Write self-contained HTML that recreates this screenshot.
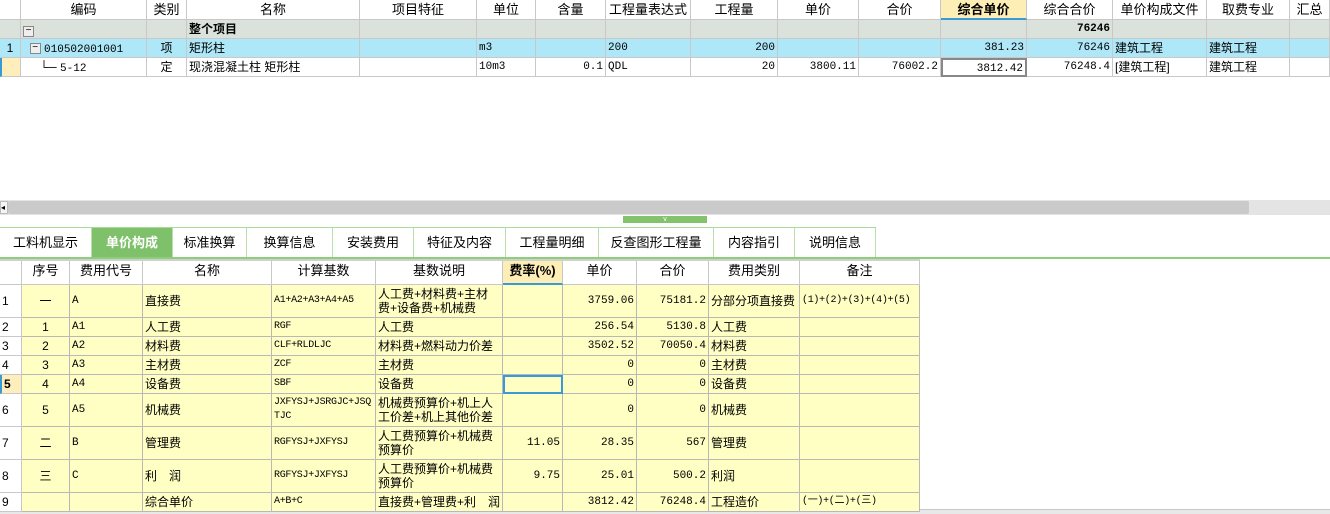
<!DOCTYPE html>
<html><head><meta charset="utf-8"><style>
*{margin:0;padding:0;box-sizing:border-box}
body{width:1330px;height:514px;overflow:hidden;background:#fff;font-family:"Liberation Sans","Noto Sans CJK SC",sans-serif;font-size:12px;color:#000;position:relative}
.c{position:absolute;border-right:1px solid #c8c8c8;border-bottom:1px solid #c8c8c8;white-space:nowrap;overflow:hidden;line-height:18px;padding:0 2px}
.h{text-align:center;line-height:19px;font-size:13px}
.r{text-align:right}.m{text-align:center}
.mono{font-family:"Liberation Mono","Noto Sans CJK SC",monospace;font-size:11px}
.tab{position:absolute;top:228px;height:29px;line-height:29px;text-align:center;font-size:13px;border-right:1px solid #b8e0a8}
.y{background:#ffffc4;border-color:#b8b8b8}
.t2{line-height:14px;white-space:normal;padding-top:2px;word-break:break-all}
</style></head><body>
<div style="position:absolute;left:0;top:200px;width:1330px;height:15px;background:#e4e4e4"></div>
<div style="position:absolute;left:8px;top:201px;width:1241px;height:13px;background:#cacaca;border-radius:2px"></div>
<div style="position:absolute;left:0;top:201px;width:8px;height:13px;background:#f4f4f4;border:1px solid #bbb;font-size:8px;line-height:11px">◂</div>
<div style="position:absolute;left:623px;top:216px;width:84px;height:7px;background:#84c26c;color:#fff;font-size:7px;line-height:7px;text-align:center">v</div>
<div style="position:absolute;left:0;top:227px;width:876px;height:1px;background:#a8dc98"></div>
<div style="position:absolute;left:0;top:257px;width:1330px;height:2px;background:#8ccf78"></div>
<div style="position:absolute;left:0;top:259px;width:920px;height:2px;background:#d0d0d0"></div>
<div class="tab" style="left:0;width:92px">工料机显示</div>
<div class="tab" style="left:92px;width:81px;background:#7fc16a;color:#fff;font-weight:bold">单价构成</div>
<div class="tab" style="left:173px;width:74px">标准换算</div>
<div class="tab" style="left:247px;width:86px">换算信息</div>
<div class="tab" style="left:333px;width:81px">安装费用</div>
<div class="tab" style="left:414px;width:92px">特征及内容</div>
<div class="tab" style="left:506px;width:93px">工程量明细</div>
<div class="tab" style="left:599px;width:115px">反查图形工程量</div>
<div class="tab" style="left:714px;width:81px">内容指引</div>
<div class="tab" style="left:795px;width:81px">说明信息</div>
<div style="position:absolute;left:0;top:509px;width:1330px;height:5px;background:#e8e8e8;border-top:1px solid #c8c8c8"></div>
<script>
function cell(p,x1,x2,y1,y2,txt,cls,bg,st){var d=document.createElement('div');d.className='c '+(cls||'');d.style.cssText='left:'+x1+'px;width:'+(x2-x1)+'px;top:'+y1+'px;height:'+(y2-y1)+'px;'+(bg?'background:'+bg+';':'')+(st||'');d.innerHTML=txt;document.body.insertBefore(d,document.body.lastElementChild);}
var X=[0,21,147,187,360,477,536,606,691,778,859,941,1027,1113,1207,1290,1330];
var H=['','编码','类别','名称','项目特征','单位','含量','工程量表达式','工程量','单价','合价','综合单价','综合合价','单价构成文件','取费专业','汇总'];
for(var i=0;i<16;i++)cell(0,X[i],X[i+1],0,20,H[i],'h',i==11?'#fdeeb5':'#fff',i==11?'font-weight:bold;border-bottom:2px solid #3a9ad6':'');
var R=[[20,39,'#dbe2dc',['','<span style="display:inline-block;width:11px;height:11px;border:1px solid #888;background:#eee;line-height:7px;font-size:10px;text-align:center;margin-top:3px">−</span>','','<b>整个项目</b>','','','','','','','','','<b>76246</b>','','','']],
[39,58,'#aee7f7',['1','&nbsp;&nbsp;<span style="display:inline-block;width:11px;height:11px;border:1px solid #888;background:#eee;line-height:7px;font-size:10px;text-align:center;vertical-align:middle">−</span> <span class="mono">010502001001</span>','项','矩形柱','','m3','','200','200','','','381.23','76246','建筑工程','建筑工程','']],
[58,77,'#fff',['','&nbsp;&nbsp;&nbsp;&nbsp;&nbsp;└─ <span class="mono">5-12</span>','定','现浇混凝土柱 矩形柱','','10m3','0.1','QDL','20','3800.11','76002.2','3812.42','76248.4','[建筑工程]','建筑工程','']]];
var al=['m','','m','','','mono','mono r','mono','mono r','mono r','mono r','mono r','mono r','','',''];
R.forEach(function(r){for(var i=0;i<16;i++){var bg=r[2];var st='';if(i==0&&r[0]==58)bg='#fdeebb',st='border-left:2px solid #3a9ad6';if(r[0]==58&&i==11)st='border:2px solid #888';cell(0,X[i],X[i+1],r[0],r[1],r[3][i],al[i],bg,st);}});
var Y=[22,70,143,272,376,503,563,637,709,800,920];
var LH=['序号','费用代号','名称','计算基数','基数说明','费率(%)','单价','合价','费用类别','备注'];
cell(0,0,22,261,285,'','h','#fff');
for(var i=0;i<10;i++)cell(0,Y[i],Y[i+1],261,285,LH[i],'h',i==5?'#fdeeb5':'#fff',i==5?'font-weight:bold;border-bottom:2px solid #3a9ad6':'');
var L=[[285,318,'1','一','A','直接费','A1+A2+A3+A4+A5','人工费+材料费+主材费+设备费+机械费','','3759.06','75181.2','分部分项直接费','(1)+(2)+(3)+(4)+(5)'],
[318,337,'2','1','A1','人工费','RGF','人工费','','256.54','5130.8','人工费',''],
[337,356,'3','2','A2','材料费','CLF+RLDLJC','材料费+燃料动力价差','','3502.52','70050.4','材料费',''],
[356,375,'4','3','A3','主材费','ZCF','主材费','','0','0','主材费',''],
[375,394,'5','4','A4','设备费','SBF','设备费','','0','0','设备费',''],
[394,427,'6','5','A5','机械费','JXFYSJ+JSRGJC+JSQTJC','机械费预算价+机上人工价差+机上其他价差','','0','0','机械费',''],
[427,460,'7','二','B','管理费','RGFYSJ+JXFYSJ','人工费预算价+机械费预算价','11.05','28.35','567','管理费',''],
[460,493,'8','三','C','利　润','RGFYSJ+JXFYSJ','人工费预算价+机械费预算价','9.75','25.01','500.2','利润',''],
[493,512,'9','','','综合单价','A+B+C','直接费+管理费+利　润','','3812.42','76248.4','工程造价','(一)+(二)+(三)']];
L.forEach(function(r){var tall=r[1]-r[0]>25;var lh='line-height:'+(r[1]-r[0]-1)+'px;';
cell(0,0,22,r[0],r[1],r[2],'',r[2]=='5'?'#fdeebb':'#fff',lh+(r[2]=='5'?'font-weight:bold;border-left:2px solid #3a9ad6;':''));
var cls=['m','mono','','mono'+(tall&&r[6].length>14?' t2':''),(tall?'t2':''),'mono r','mono r','mono r','','mono'];
for(var i=0;i<10;i++){var st=(cls[i].indexOf('t2')>=0)?'':lh;if(i==3||i==9)st+='font-size:10px;letter-spacing:-0.3px;';if(r[2]=='5'&&i==5)st+='border:2px solid #3a9ad6;';cell(0,Y[i],Y[i+1],r[0],r[1],r[i+3],'y '+cls[i],'#ffffc4',st);}});
</script>
</body></html>
